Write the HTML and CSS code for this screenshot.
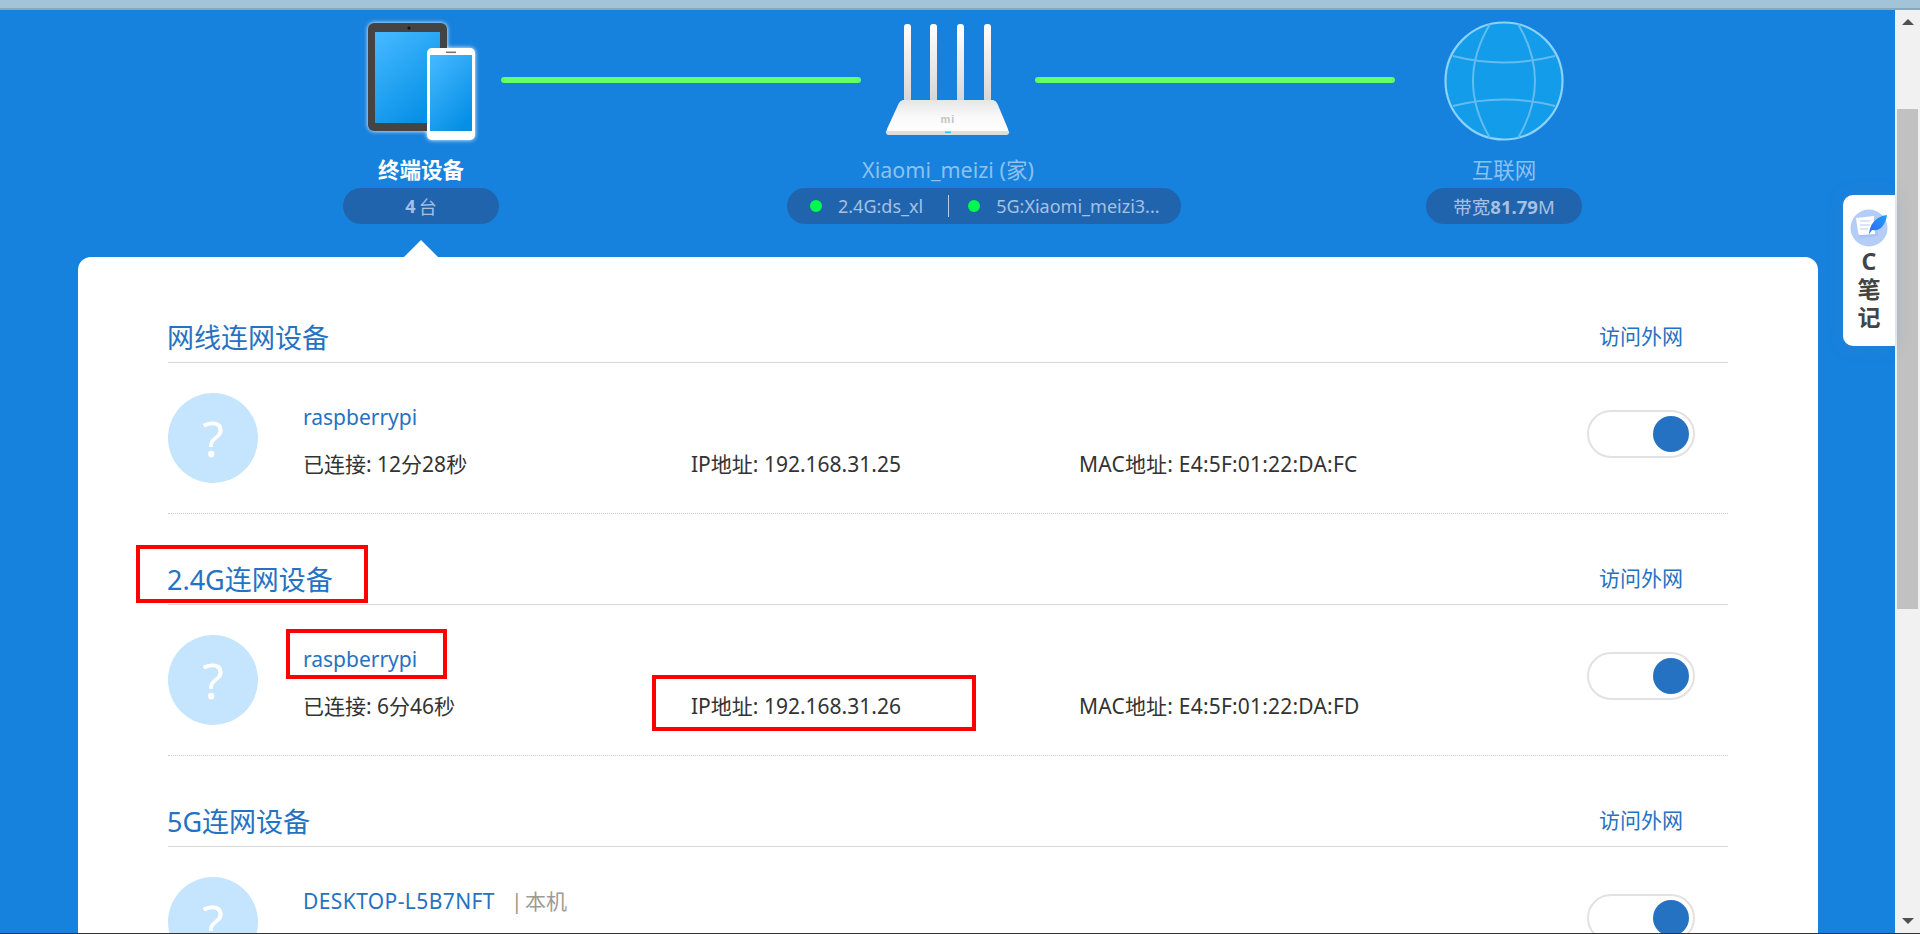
FILE: index.html
```html
<!DOCTYPE html>
<html lang="zh-CN">
<head>
<meta charset="utf-8">
<title>小米路由器</title>
<link rel="stylesheet" href="styles.css">
</head>
<body>
<div class="window-top"></div>
<div class="window-main">
  <main class="page">
    <header class="topo">
      <div class="node node-devices">
        <div class="node-icon">
          <svg class="glow" width="120" height="120" viewBox="0 0 120 120">
            <defs>
              <linearGradient id="scr" x1="0.1" y1="0" x2="0.7" y2="1">
                <stop offset="0" stop-color="#44b8ff"/><stop offset="1" stop-color="#058fe5"/>
              </linearGradient>
            </defs>
            <rect x="7" y="2" width="79" height="108" rx="6" fill="#444"/>
            <rect x="14" y="11" width="65" height="91" fill="url(#scr)"/>
            <circle cx="48" cy="7" r="1.5" fill="#111"/>
            <rect x="66" y="27" width="48" height="92" rx="5" fill="#fff"/>
            <rect x="69" y="34" width="42" height="76" fill="url(#scr)"/>
            <rect x="85" y="30.5" width="10" height="1.6" fill="#777"/>
          </svg>
        </div>
        <div class="node-label active">终端设备</div>
        <div class="pill pill-count"><b>4</b> 台</div>
      </div>
      <div class="link"></div>
      <div class="node node-router">
        <div class="node-icon">
          <svg width="130" height="120" viewBox="0 0 130 120">
            <defs>
              <linearGradient id="ant" x1="0" y1="0" x2="0" y2="1">
                <stop offset="0" stop-color="#fff"/><stop offset="1" stop-color="#d5d5d5"/>
              </linearGradient>
              <linearGradient id="body" x1="0" y1="0" x2="0" y2="1">
                <stop offset="0" stop-color="#e6e6e6"/><stop offset="0.5" stop-color="#fafafa"/><stop offset="1" stop-color="#fff"/>
              </linearGradient>
            </defs>
            <rect x="21" y="3" width="7" height="78" rx="3" fill="url(#ant)"/>
            <rect x="47" y="3" width="7" height="78" rx="3" fill="url(#ant)"/>
            <rect x="74" y="3" width="7" height="78" rx="3" fill="url(#ant)"/>
            <rect x="101" y="3" width="7" height="78" rx="3" fill="url(#ant)"/>
            <path d="M 21 79 H 109 Q 113 79 115 84 L 125 108 Q 127 114 122 114 H 7 Q 2 114 4 108 L 15 84 Q 17 79 21 79 Z" fill="url(#body)"/>
            <path d="M 3 110 Q 2 114 7 114 H 122 Q 127 114 126 110 Z" fill="#dedede"/>
            <rect x="62" y="110.5" width="6" height="1.6" fill="#2bc4ff"/>
            <text x="65" y="102" class="mi-mark">mi</text>
          </svg>
        </div>
        <div class="node-label">Xiaomi_meizi (家)</div>
        <div class="pill pill-wifi">
          <span class="dot"></span><span class="ssid">2.4G:ds_xl</span><span class="sep"></span>
          <span class="dot"></span><span class="ssid">5G:Xiaomi_meizi3...</span>
        </div>
      </div>
      <div class="link"></div>
      <div class="node node-net">
        <div class="node-icon">
          <svg width="120" height="120" viewBox="0 0 120 120">
            <circle cx="60" cy="60" r="58.5" fill="#129ce9" stroke="#8ad2f7" stroke-width="2.2"/>
            <g fill="none" stroke="#63bcf0" stroke-width="2">
              <path d="M 46 3 Q 12 60 46 117"/>
              <path d="M 74 3 Q 108 60 74 117"/>
              <path d="M 9 35 Q 60 48 111 35"/>
              <path d="M 9 85 Q 60 72 111 85"/>
            </g>
          </svg>
        </div>
        <div class="node-label">互联网</div>
        <div class="pill">带宽<b>81.79</b>M</div>
      </div>
    </header>

    <section class="card">
      <div class="group">
        <div class="group-head"><h2>网线连网设备</h2><a class="ext">访问外网</a></div>
        <div class="device">
          <div class="avatar">?</div>
          <div class="device-info">
            <div class="device-name">raspberrypi</div>
            <div class="device-meta"><span>已连接: 12分28秒</span><span>IP地址: 192.168.31.25</span><span class="mac">MAC地址: E4:5F:01:22:DA:FC</span></div>
          </div>
          <div class="toggle"><span class="knob"></span></div>
        </div>
      </div>
      <div class="group">
        <div class="group-head"><h2>2.4G连网设备</h2><a class="ext">访问外网</a></div>
        <div class="device">
          <div class="avatar">?</div>
          <div class="device-info">
            <div class="device-name">raspberrypi</div>
            <div class="device-meta"><span>已连接: 6分46秒</span><span>IP地址: 192.168.31.26</span><span class="mac">MAC地址: E4:5F:01:22:DA:FD</span></div>
          </div>
          <div class="toggle"><span class="knob"></span></div>
        </div>
      </div>
      <div class="group">
        <div class="group-head"><h2>5G连网设备</h2><a class="ext">访问外网</a></div>
        <div class="device">
          <div class="avatar">?</div>
          <div class="device-info">
            <div class="device-name"><span class="host-upper">DESKTOP-L5B7NFT</span><span class="self">| 本机</span></div>
          </div>
          <div class="toggle"><span class="knob"></span></div>
        </div>
      </div>
    </section>
  </main>

  <aside class="scrollbar">
    <span class="arrow-up"></span>
    <span class="thumb"></span>
    <span class="arrow-down"></span>
  </aside>

  <div class="mark mark-title"></div>
  <div class="mark mark-name"></div>
  <div class="mark mark-ip"></div>

  <div class="side-tab">
    <svg width="38" height="38" viewBox="0 0 38 38">
      <defs>
        <linearGradient id="feather" x1="1" y1="0" x2="0" y2="1">
          <stop offset="0" stop-color="#1aa0fb"/><stop offset="1" stop-color="#3a63f0"/>
        </linearGradient>
      </defs>
      <circle cx="19" cy="19" r="18.5" fill="#b3cdf7"/>
      <path d="M 7 10 L 25 8 L 28 27 L 12 29 Q 9 29 9 26 Z" fill="#a9c2f3"/>
      <path d="M 6 9 L 24 7 L 25 25 L 11 26 Q 8 26 8 23 Z" fill="#fff"/>
      <path d="M 10 12 H 20 M 10 16 H 20 M 10 20 H 18" stroke="#cfdcf6" stroke-width="1.4"/>
      <path d="M 19 25 Q 20 14 28 9 Q 33 6 37 6 Q 36 14 31 19 Q 27 22 22 21 L 18.5 26 Z" fill="url(#feather)"/>
    </svg>
    <p class="side-text">C<br>笔<br>记</p>
  </div>
</div>
<div class="window-bottom"></div>
</body>
</html>
```
FILE: styles.css
```css
* { box-sizing: border-box; }
html, body { margin: 0; height: 100%; }
body {
  height: 934px;
  overflow: hidden;
  display: flex;
  flex-direction: column;
  font-family: "Noto Sans", "Noto Sans CJK SC", sans-serif;
  color: #333;
  background: #1782dd;
}
.window-top { height: 10px; background: #a3c4d8; border-bottom: 2px solid #89a8ba; flex: none; }
.window-bottom { height: 1px; background: #333; flex: none; }
.window-main { position: relative; flex: 1; min-height: 0; display: flex; overflow: hidden; }
.page { flex: 1; min-width: 0; overflow: hidden; background: #1782dd; }

.topo { display: flex; align-items: flex-start; padding: 11px 0 33px 343px; height: 247px; }
.node { position: relative; display: flex; flex-direction: column; align-items: center; flex: none; }
.node-devices { width: 156px; margin-right: 2px; }
.node-router { width: 174px; }
.node-net { width: 218px; }
.node-icon { height: 120px; display: flex; justify-content: center; margin-bottom: 14px; }
.glow { filter: drop-shadow(0 0 2px #fff); }
.mi-mark { font: 700 11px "Liberation Sans", sans-serif; fill: #c4c4c4; text-anchor: middle; letter-spacing: 1px; }
.node-label { height: 30px; line-height: 30px; font-size: 21.5px; color: #8cc1ef; white-space: nowrap; }
.node-label.active { color: #fff; font-weight: 700; }
.pill {
  flex: none;
  margin-top: 3px;
  height: 36px;
  width: 156px;
  display: flex;
  align-items: center;
  justify-content: center;
  border-radius: 18px;
  background: #2164ae;
  color: #a6c1e2;
  font-size: 18.5px;
  white-space: nowrap;
}
.pill b { font-weight: 700; }
.pill-count { font-size: 18px; }
.node-devices .pill b { margin-right: 3px; }
.node-devices::after {
  content: "";
  position: absolute;
  left: 61px;
  top: 219px;
  border-left: 17px solid transparent;
  border-right: 17px solid transparent;
  border-bottom: 17px solid #fff;
}
.pill-wifi { align-self: flex-start; margin-left: -74px; width: 394px; justify-content: flex-start; padding-left: 23px; font-size: 18px; }
.dot { width: 12px; height: 12px; border-radius: 50%; background: #00f94a; flex: none; }
.ssid { margin-left: 16px; }
.sep { width: 1px; height: 22px; background: #b9cde6; margin: 0 19px 0 25px; flex: none; }
.link { flex: none; width: 360px; height: 6px; margin-top: 56px; border-radius: 3px; background: #62ff67; }

.card {
  margin: 0 77px 0 78px;
  padding: 15px 90px 0;
  background: #fff;
  border-radius: 13px 13px 0 0;
}
.group-head {
  display: flex;
  justify-content: space-between;
  align-items: flex-start;
  height: 91px;
  padding-top: 46px;
  border-bottom: 1px solid #d8d8d8;
}
.group-head h2 { margin: 2px 0 0 -1px; font-size: 27px; line-height: 36px; font-weight: 400; color: #2672c2; }
.ext { padding-right: 45px; text-align: right; font-size: 21px; line-height: 36px; color: #2672c2; }
.device {
  display: flex;
  height: 151px;
  padding-top: 30px;
  border-bottom: 1px dotted #cfcfcf;
}
.avatar {
  flex: none;
  width: 90px;
  height: 90px;
  margin-right: 45px;
  border-radius: 50%;
  background: #c5e4fd;
  color: #fff;
  font-size: 50px;
  line-height: 90px;
  text-align: center;
}
.device-info { flex: 1; min-width: 0; }
.device-name { height: 48px; line-height: 48px; font-size: 21px; color: #2672c2; }
.host-upper { letter-spacing: 0.4px; }
.self { margin-left: 16px; color: #a09a94; word-spacing: -3px; }
.device-meta { display: grid; grid-template-columns: 388px 388px 1fr; line-height: 46px; font-size: 21px; color: #333; white-space: nowrap; }
.mac { letter-spacing: 0.2px; }
.toggle {
  flex: none;
  position: relative;
  width: 108px;
  height: 48px;
  margin: 17px 33px 0 0;
  border: 2px solid #e2e2e2;
  border-radius: 24px;
  background: #fff;
}
.knob { position: absolute; right: 4px; top: 4px; width: 36px; height: 36px; border-radius: 50%; background: #2672c2; }

.scrollbar { flex: none; width: 25px; padding: 0 2px; display: flex; flex-direction: column; align-items: center; background: #f1f1f1; }
.arrow-up { margin-top: 9px; border-left: 6px solid transparent; border-right: 6px solid transparent; border-bottom: 6px solid #505050; }
.thumb { width: 21px; height: 500px; margin-top: 84px; background: #c1c1c1; }
.arrow-down { margin-top: auto; margin-bottom: 9px; border-left: 6px solid transparent; border-right: 6px solid transparent; border-top: 6px solid #505050; }

.mark { position: absolute; border: 4px solid #f00; }
.mark-title { left: 136px; top: 535px; width: 232px; height: 58px; }
.mark-name { left: 286px; top: 619px; width: 161px; height: 50px; }
.mark-ip { left: 652px; top: 665px; width: 324px; height: 56px; }

.side-tab {
  position: absolute;
  right: 25px;
  top: 185px;
  width: 52px;
  height: 151px;
  padding-top: 14px;
  display: flex;
  flex-direction: column;
  align-items: center;
  background: #fff;
  border-radius: 10px 0 0 10px;
  box-shadow: 0 0 16px rgba(80, 130, 200, 0.25);
}
.side-text { margin: 0; text-align: center; line-height: 28px; font-size: 23px; font-weight: 700; color: #444; }
```
